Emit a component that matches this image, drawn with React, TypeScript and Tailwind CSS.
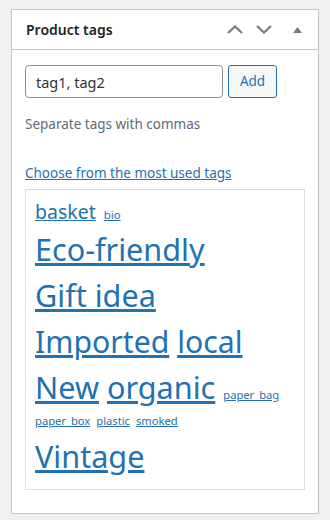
import React from 'react';

type Tag = { name: string; size: number };

// rows of the tag cloud: row font size, line height and the tags on it
const rows: { size: number; lh: number; tags: Tag[] }[] = [
  { size: 19.5, lh: 29, tags: [{ name: 'basket', size: 19.5 }, { name: 'bio', size: 11.4 }] },
  { size: 30.6, lh: 46, tags: [{ name: 'Eco-friendly', size: 30.6 }] },
  { size: 30.6, lh: 46, tags: [{ name: 'Gift idea', size: 30.6 }] },
  { size: 30.6, lh: 46, tags: [{ name: 'Imported', size: 30.2 }, { name: 'local', size: 30.2 }] },
  {
    size: 30.6,
    lh: 46,
    tags: [
      { name: 'New', size: 30.6 },
      { name: 'organic', size: 30.6 },
      { name: 'paper_bag', size: 11.2 },
    ],
  },
  {
    size: 11.2,
    lh: 21,
    tags: [
      { name: 'paper_box', size: 11.2 },
      { name: 'plastic', size: 11.2 },
      { name: 'smoked', size: 11.2 },
    ],
  },
  { size: 30.6, lh: 50, tags: [{ name: 'Vintage', size: 30.6 }] },
];

export default function App() {
  return (
    <div className="min-h-[520px] bg-[#f0f0f1] pt-[9px] px-[11px] pb-[6px] font-['Noto_Sans',sans-serif] text-[#1d2327]">
      <div className="border border-[#c3c4c7] bg-white">
        {/* Header */}
        <div className="flex h-[40px] items-center justify-between border-b border-[#c3c4c7] pl-[14px] pr-[16px]">
          <h2 className="text-[14px] font-semibold">Product tags</h2>
          <div className="flex items-center text-[#787c82]">
            <svg width="16" height="9" viewBox="0 0 16 9" className="mr-[13px]">
              <path d="M1 8 L8 1.5 L15 8" fill="none" stroke="currentColor" strokeWidth="2.2" />
            </svg>
            <svg width="16" height="9" viewBox="0 0 16 9" className="mr-[21px]">
              <path d="M1 1 L8 7.5 L15 1" fill="none" stroke="currentColor" strokeWidth="2.2" />
            </svg>
            <svg width="9" height="6" viewBox="0 0 9 6">
              <path d="M0 6 L4.5 0 L9 6 Z" fill="currentColor" />
            </svg>
          </div>
        </div>

        {/* Body */}
        <div className="px-[13px] pt-[15px] pb-[23px]">
          <div className="flex gap-[5px]">
            <input
              defaultValue="tag1, tag2"
              className="h-[33px] w-[198px] rounded-[4px] border border-[#8c8f94] px-[10px] text-[14.5px] text-[#2c3338] outline-none"
            />
            <button className="h-[33px] w-[49px] rounded-[3px] border border-[#2271b1] bg-[#f6f7f7] text-[13.5px] text-[#2271b1]">
              Add
            </button>
          </div>
          <p className="mt-[16px] text-[13.5px] leading-[20px] text-[#646970]">Separate tags with commas</p>

          <a href="#" className="mt-[29px] block text-[13.5px] leading-[20px] text-[#2271b1] underline">
            Choose from the most used tags
          </a>

          <div className="mt-[6px] border border-[#dcdcde] px-[9px] pt-[7px] pb-[8px]">
            {rows.map((row, i) => (
              <div
                key={i}
                className="whitespace-nowrap"
                style={{ fontSize: `${row.size}px`, lineHeight: `${row.lh}px` }}
              >
                {row.tags.map((t, j) => (
                  <a
                    key={t.name}
                    href="#"
                    className={`leading-none text-[#2271b1] underline ${
                      j < row.tags.length - 1 ? (row.size < 12 ? 'mr-[6px]' : 'mr-[8px]') : ''
                    }`}
                    style={{ fontSize: `${t.size}px` }}
                  >
                    {t.name}
                  </a>
                ))}
              </div>
            ))}
          </div>
        </div>
      </div>
    </div>
  );
}
